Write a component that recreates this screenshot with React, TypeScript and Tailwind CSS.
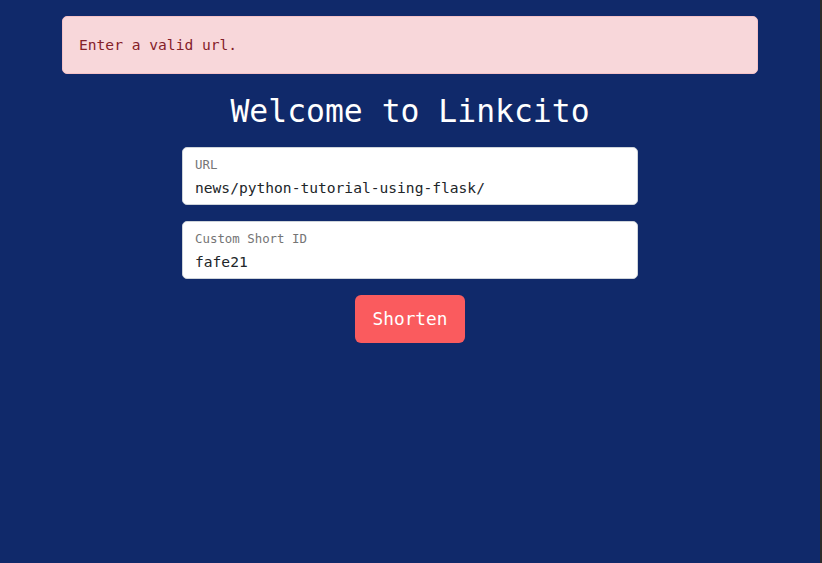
import React, { useState } from 'react';

const mono = { fontFamily: '"DejaVu Sans Mono", "Liberation Mono", monospace' };

function FloatingField({ label, value, onChange }: { label: string; value: string; onChange: (v: string) => void }) {
    return (
        <label className="flex flex-col w-full h-[58px] bg-white border border-[#ced4da] rounded-[5px] px-[12px] pt-[9px]">
            <span className="text-[12.4px] leading-[16px] text-[#757575]">{label}</span>
            <input
                value={value}
                onChange={(e) => onChange(e.target.value)}
                className="mt-[5px] text-[14.6px] leading-[20px] text-[#212529] outline-none bg-transparent"
                style={mono}
            />
        </label>
    );
}

export default function App() {
    const [url, setUrl] = useState('news/python-tutorial-using-flask/');
    const [shortId, setShortId] = useState('fafe21');

    return (
        <div className="flex w-full h-[563px] bg-[#10296a]" style={mono}>
            <main className="flex-1 flex flex-col items-center pt-[16px]">
                {/* Error alert */}
                <div className="w-[696px] h-[58px] flex items-center px-[16px] bg-[#f8d7da] border border-[#f5c2c7] rounded-[5px] text-[#842029] text-[14.6px]">
                    Enter a valid url.
                </div>

                <h1 className="mt-[17px] text-[31.4px] leading-[40px] text-white">Welcome to Linkcito</h1>

                <form className="w-[456px] mt-[16px] flex flex-col items-center gap-[16px]" onSubmit={(e) => e.preventDefault()}>
                    <FloatingField label="URL" value={url} onChange={setUrl} />
                    <FloatingField label="Custom Short ID" value={shortId} onChange={setShortId} />
                    <button
                        type="submit"
                        className="w-[110px] h-[48px] bg-[#fa5b5e] rounded-[6px] text-white text-[17.8px] font-medium"
                        style={mono}
                    >
                        Shorten
                    </button>
                </form>
            </main>
            <div className="w-[2px] bg-[#2b2b2b]" />
        </div>
    );
}
